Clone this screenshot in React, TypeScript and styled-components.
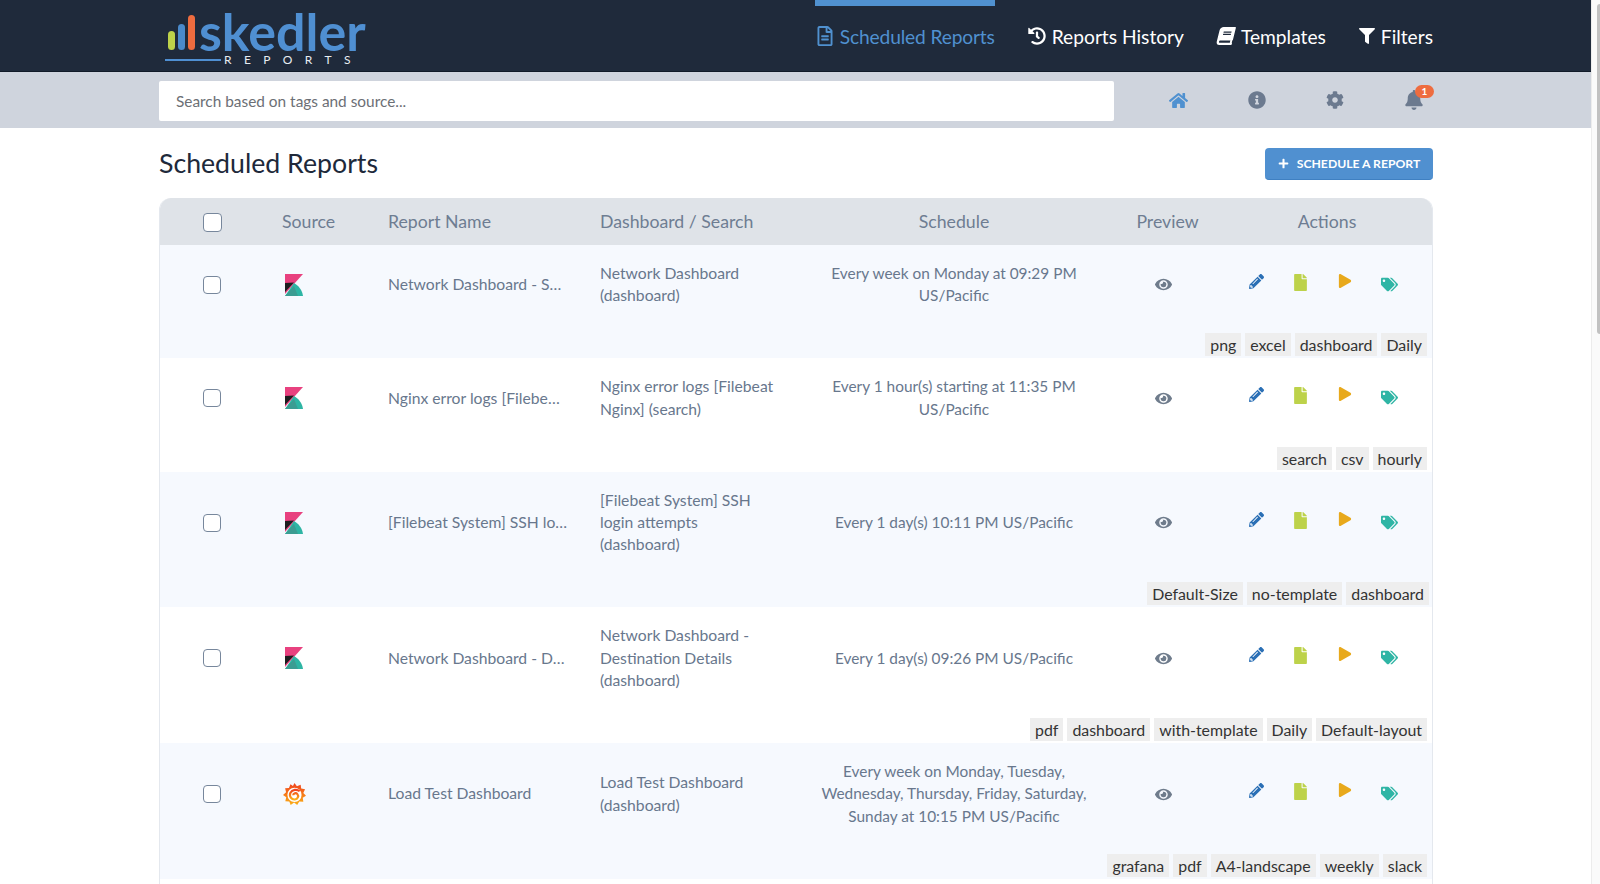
import * as React from 'react';
import styled, { createGlobalStyle } from 'styled-components';
import {
  FaBell, FaBook, FaCog, FaEye, FaFile, FaFilter, FaHistory, FaHome, FaInfoCircle,
  FaPencilAlt, FaPlay, FaPlus, FaRegFileAlt, FaTags,
} from 'react-icons/fa';

const COLUMNS = '106px 123px 212px 210px 288px 135px 200px';

const GlobalStyle = createGlobalStyle`
  html, body {
    margin: 0;
    height: 100%;
    overflow: hidden;
    background: #fff;
    font-family: Lato, "Liberation Sans", sans-serif;
  }
  #root { height: 100%; }
  * { box-sizing: border-box; }
`;

const Shell = styled.div`
  display: flex;
  height: 884px;
  overflow: hidden;
`;

const Main = styled.div`
  width: 1591px;
  display: flex;
  flex-direction: column;
`;

const ScrollTrack = styled.div`
  width: 9px;
  padding: 4px 0 0 5px;
  background: #fafafa;
  border-left: 1px solid #ececec;
`;

const ScrollThumb = styled.div`
  width: 4px;
  height: 330px;
  border-radius: 3px 0 0 3px;
  background: #c1c1c1;
`;

const TopBar = styled.header`
  height: 72px;
  flex: none;
  background: #1f2a3b;
  border-bottom: 1px solid #111a28;
  padding: 0 158px 0 159px;
  display: flex;
  justify-content: space-between;
`;

const Logo = styled.div`
  width: 215px;
  display: flex;
  padding: 13px 0 0 9px;
`;

const LogoBars = styled.div`
  display: flex;
  align-items: flex-end;
  gap: 3px;
  height: 37px;
  margin-right: 6px;
`;

const LogoBar = styled.span<{ $color: string; $height: number }>`
  width: 7px;
  height: ${p => p.$height}px;
  border-radius: 4px;
  background: ${p => p.$color};
`;

const LogoWords = styled.div`
  display: flex;
  flex-direction: column;
  margin-left: -2px;
`;

const LogoName = styled.div`
  color: #4f8fd2;
  font-size: 52px;
  line-height: 37px;
  font-weight: 700;
  height: 40px;
`;

const LogoSub = styled.div`
  display: flex;
  align-items: center;
  margin-left: -34px;
  color: #e8edf2;
  font-size: 12px;
  line-height: 13px;
  letter-spacing: 12.4px;
`;

const LogoRule = styled.span`
  width: 56px;
  height: 2px;
  margin-right: 3px;
  background: #4f8fd2;
`;

const NavList = styled.nav`
  display: flex;
  gap: 33px;
`;

const NavItem = styled.a<{ $active?: boolean }>`
  display: flex;
  align-items: center;
  gap: ${p => (p.$active ? '5px' : '6px')};
  height: 71px;
  padding-bottom: 5px;
  font-size: 19.2px;
  letter-spacing: ${p => (p.$active ? '-0.15px' : '0')};
  color: ${p => (p.$active ? '#5091d0' : '#fff')};
  border-top: 6px solid ${p => (p.$active ? '#5091d0' : 'transparent')};
  svg { font-size: 18px; }
`;

const FileIcon = styled(FaRegFileAlt)`
  && { font-size: 20px; }
`;

const FilterIcon = styled(FaFilter)`
  && { font-size: 16px; }
`;

const BookIcon = styled(FaBook)`
  transform: skewX(-14deg);
`;

const SubBar = styled.div`
  height: 56px;
  flex: none;
  background: #cfd4dd;
  padding: 9px 158px 0 159px;
  display: flex;
`;

const SearchBox = styled.div`
  width: 955px;
  height: 40px;
  padding: 0 17px;
  display: flex;
  align-items: center;
  background: #fff;
  border-radius: 2px;
  color: #6c6f75;
  font-size: 15.4px;
`;

const SubIcons = styled.div`
  flex: 1;
  display: flex;
  justify-content: space-between;
  align-items: center;
  height: 38px;
  padding: 0 9px 0 55px;
  font-size: 18px;
  color: #6c7a8f;
`;

const HomeIcon = styled(FaHome)`
  color: #5091d0;
  font-size: 19px;
`;

const BellWrap = styled.span`
  position: relative;
  display: flex;
  font-size: 20px;
`;

const BellBadge = styled.span`
  position: absolute;
  left: 11px;
  top: -5px;
  width: 19px;
  height: 13px;
  border-radius: 7px;
  background: #ee6c3f;
  color: #fff;
  font-size: 10px;
  font-weight: 700;
  line-height: 13px;
  text-align: center;
`;

const Content = styled.main`
  flex: 1;
  padding: 0 158px 0 159px;
  display: flex;
  flex-direction: column;
`;

const TitleRow = styled.div`
  height: 70px;
  flex: none;
  display: flex;
  align-items: center;
  justify-content: space-between;
`;

const Title = styled.h1`
  margin: 0;
  font-size: 26.7px;
  font-weight: 400;
  color: #20293a;
`;

const ScheduleButton = styled.button`
  width: 168px;
  height: 32px;
  margin-top: 2px;
  display: flex;
  align-items: center;
  justify-content: center;
  gap: 8px;
  padding: 0;
  border: 0;
  border-bottom: 1px solid #3f80c2;
  border-radius: 4px;
  background: #5090d0;
  color: #fff;
  font-family: inherit;
  font-size: 12.2px;
  font-weight: 700;
  svg { font-size: 11px; }
`;

const Table = styled.section`
  flex: 1;
  border-left: 1px solid #e4e8ee;
  border-right: 1px solid #e4e8ee;
  border-radius: 12px 12px 0 0;
  overflow: hidden;
`;

const HeaderRow = styled.div`
  display: grid;
  grid-template-columns: ${COLUMNS};
  align-items: center;
  height: 47px;
  margin-left: -1px;
  padding-bottom: 1px;
  background: #dfe3e8;
  color: #6e7d92;
  font-size: 17.7px;
`;

const HeaderCell = styled.div<{ $align?: string; $pad?: string }>`
  text-align: ${p => p.$align || 'left'};
  padding: ${p => p.$pad || '0'};
`;

const CheckCell = styled.div<{ $top: number }>`
  display: flex;
  justify-content: center;
  padding-top: ${p => p.$top}px;
`;

const CheckBox = styled.span<{ $size: number }>`
  width: ${p => p.$size}px;
  height: ${p => p.$size}px;
  background: #fff;
  border: 1.5px solid #77879c;
  border-radius: 4px;
`;

const Row = styled.div<{ $alt: boolean }>`
  margin-left: -1px;
  background: ${p => (p.$alt ? '#fff' : '#f6f9fe')};
`;

const RowCells = styled.div`
  display: grid;
  grid-template-columns: ${COLUMNS};
  align-items: center;
  padding: 17px 0 16.5px;
  color: #68778d;
  font-size: 15.7px;
  line-height: 22.4px;
`;

const SourceCell = styled.div<{ $left: number }>`
  display: flex;
  padding: 1px 0 0 ${p => p.$left}px;
`;

const NameCell = styled.div`
  width: 179.3px;
  white-space: nowrap;
  overflow: hidden;
  text-overflow: ellipsis;
`;

const DashCell = styled.div`
  width: 180px;
`;

const ScheduleCell = styled.div`
  text-align: center;
  font-size: 15.4px;
`;

const PreviewCell = styled.div`
  display: flex;
  justify-content: center;
  padding: 1px 5px 0 0;
  color: #6f7c8c;
  font-size: 17px;
`;

const ActionsCell = styled.div`
  display: flex;
  padding: 0 0 2px 1px;
`;

const ActionIcon = styled.span<{ $color: string; $size: number; $drop?: number }>`
  width: 44.5px;
  display: flex;
  justify-content: center;
  color: ${p => p.$color};
  font-size: ${p => p.$size}px;
  padding-top: ${p => p.$drop || 0}px;
`;

const TagRow = styled.div<{ $inset: number }>`
  display: flex;
  justify-content: flex-end;
  gap: 4px;
  margin-top: 10px;
  padding: 0 ${p => p.$inset}px 2px 0;
`;

const Tag = styled.span`
  height: 23px;
  padding: 0 5px;
  background: #eee;
  color: #333;
  font-size: 15.9px;
  line-height: 23px;
`;

const KibanaLogo = () => (
  <svg width="18" height="22" viewBox="0 0 18 22">
    <path d="M0 0H18L0 20Z" fill="#e8417f" />
    <path d="M0 9L9 8.5L0 18Z" fill="#1d1d1f" />
    <path d="M0 22L9 9C14 12 17 16 18 22Z" fill="#2eb5a4" />
    <path d="M0 22L9 12L13 22Z" fill="#3b9c92" />
  </svg>
);

const GrafanaLogo = () => (
  <svg width="23" height="23" viewBox="0 0 24 24">
    <defs>
      <linearGradient id="grafana-fill" x1="0" y1="0" x2="0" y2="1">
        <stop offset="0" stopColor="#f0401e" />
        <stop offset="1" stopColor="#fbb016" />
      </linearGradient>
    </defs>
    <path
      d="M12 0L14.5 3.4L18.4 1.8L19 5.8L23 6.6L21.2 10.4L24 13.2L20.6 15.4L21.2 19.6L17 19.4L14.8 23L11.6 20.4L8 23L6.6 19.2L2.4 19L3.4 14.8L0 12.4L3.2 9.6L2.2 5.6L6.2 5.2L7.8 1.4L10.4 3.2Z"
      fill="url(#grafana-fill)"
    />
    <circle cx="12" cy="12.4" r="7.4" fill="#fff" />
    <path
      d="M17.4 8.6C14.6 6.2 9.6 6.6 7.8 10.2C6 14 9 17.6 12.4 17.2C15.6 16.8 16.6 13.4 15 11.6C13.6 10 10.8 10.6 10.6 12.8"
      fill="none"
      stroke="url(#grafana-fill)"
      strokeWidth="2.3"
    />
  </svg>
);

interface Report {
  source: 'kibana' | 'grafana';
  name: string;
  dash: string;
  schedule: string;
  tags: string[];
  tagInset: number;
}

const reports: Report[] = [
  {
    source: 'kibana',
    name: 'Network Dashboard - Source Details',
    dash: 'Network Dashboard (dashboard)',
    schedule: 'Every week on Monday at 09:29 PM US/Pacific',
    tags: ['png', 'excel', 'dashboard', 'Daily'],
    tagInset: 5,
  },
  {
    source: 'kibana',
    name: 'Nginx error logs [Filebeat Nginx]',
    dash: 'Nginx error logs [Filebeat Nginx] (search)',
    schedule: 'Every 1 hour(s) starting at 11:35 PM US/Pacific',
    tags: ['search', 'csv', 'hourly'],
    tagInset: 5,
  },
  {
    source: 'kibana',
    name: '[Filebeat System] SSH login attempts',
    dash: '[Filebeat System] SSH login attempts (dashboard)',
    schedule: 'Every 1 day(s) 10:11 PM US/Pacific',
    tags: ['Default-Size', 'no-template', 'dashboard'],
    tagInset: 3,
  },
  {
    source: 'kibana',
    name: 'Network Dashboard - Destination Details',
    dash: 'Network Dashboard - Destination Details (dashboard)',
    schedule: 'Every 1 day(s) 09:26 PM US/Pacific',
    tags: ['pdf', 'dashboard', 'with-template', 'Daily', 'Default-layout'],
    tagInset: 5,
  },
  {
    source: 'grafana',
    name: 'Load Test Dashboard',
    dash: 'Load Test Dashboard (dashboard)',
    schedule: 'Every week on Monday, Tuesday, Wednesday, Thursday, Friday, Saturday, Sunday at 10:15 PM US/Pacific',
    tags: ['grafana', 'pdf', 'A4-landscape', 'weekly', 'slack'],
    tagInset: 5,
  },
];

const App = () => (
  <Shell>
    <GlobalStyle />
    <Main>
      <TopBar>
        <Logo>
          <LogoBars>
            <LogoBar $color="#bdd24a" $height={19} />
            <LogoBar $color="#4a8acb" $height={26} />
            <LogoBar $color="#ee6c3f" $height={35} />
          </LogoBars>
          <LogoWords>
            <LogoName>skedler</LogoName>
            <LogoSub><LogoRule />REPORTS</LogoSub>
          </LogoWords>
        </Logo>
        <NavList>
          <NavItem $active><FileIcon />Scheduled Reports</NavItem>
          <NavItem><FaHistory />Reports History</NavItem>
          <NavItem><BookIcon />Templates</NavItem>
          <NavItem><FilterIcon />Filters</NavItem>
        </NavList>
      </TopBar>
      <SubBar>
        <SearchBox>Search based on tags and source...</SearchBox>
        <SubIcons>
          <HomeIcon />
          <FaInfoCircle />
          <FaCog />
          <BellWrap><FaBell /><BellBadge>1</BellBadge></BellWrap>
        </SubIcons>
      </SubBar>
      <Content>
        <TitleRow>
          <Title>Scheduled Reports</Title>
          <ScheduleButton><FaPlus />SCHEDULE A REPORT</ScheduleButton>
        </TitleRow>
        <Table>
          <HeaderRow>
            <CheckCell $top={2}><CheckBox $size={19} /></CheckCell>
            <HeaderCell $pad="0 0 0 17px">Source</HeaderCell>
            <HeaderCell>Report Name</HeaderCell>
            <HeaderCell>Dashboard / Search</HeaderCell>
            <HeaderCell $align="center">Schedule</HeaderCell>
            <HeaderCell $align="center" $pad="0 0 0 4px">Preview</HeaderCell>
            <HeaderCell $align="center" $pad="0 12px 0 0">Actions</HeaderCell>
          </HeaderRow>
          {reports.map((report, i) => (
            <Row key={report.name} $alt={i % 2 === 1}>
              <RowCells>
                <CheckCell $top={1}><CheckBox $size={18} /></CheckCell>
                <SourceCell $left={report.source === 'kibana' ? 20 : 18}>
                  {report.source === 'kibana' ? <KibanaLogo /> : <GrafanaLogo />}
                </SourceCell>
                <NameCell>{report.name}</NameCell>
                <DashCell>{report.dash}</DashCell>
                <ScheduleCell>{report.schedule}</ScheduleCell>
                <PreviewCell><FaEye /></PreviewCell>
                <ActionsCell>
                  <ActionIcon $color="#2a6fb5" $size={15}><FaPencilAlt /></ActionIcon>
                  <ActionIcon $color="#bdd24a" $size={17}><FaFile /></ActionIcon>
                  <ActionIcon $color="#e8a91c" $size={14}><FaPlay /></ActionIcon>
                  <ActionIcon $color="#2fb5a5" $size={17} $drop={2}><FaTags /></ActionIcon>
                </ActionsCell>
              </RowCells>
              <TagRow $inset={report.tagInset}>
                {report.tags.map(tag => <Tag key={tag}>{tag}</Tag>)}
              </TagRow>
            </Row>
          ))}
        </Table>
      </Content>
    </Main>
    <ScrollTrack><ScrollThumb /></ScrollTrack>
  </Shell>
);

export default App;
